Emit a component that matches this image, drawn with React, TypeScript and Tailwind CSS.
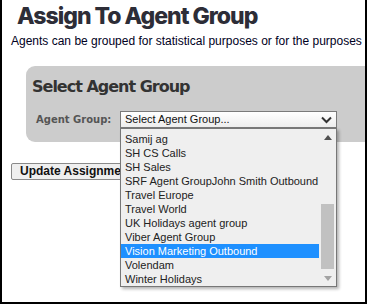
import React from "react";

const items = [
  "Samij ag",
  "SH CS Calls",
  "SH Sales",
  "SRF Agent GroupJohn Smith Outbound",
  "Travel Europe",
  "Travel World",
  "UK Holidays agent group",
  "Viber Agent Group",
  "Vision Marketing Outbound",
  "Volendam",
  "Winter Holidays",
];

export default function App() {
  return (
    <div className="relative w-[367px] h-[304px] overflow-hidden bg-white border-x-2 border-b-2 border-black font-['Liberation_Sans',Arial,sans-serif]">
      <h1 className="pl-[15px] pt-[1px] h-[34px] text-[23px] leading-[30px] font-extrabold text-[#2d2d37] tracking-[-1px] font-['Inter',sans-serif]">
        Assign To Agent Group
      </h1>
      <p className="pl-[9px] text-[12px] leading-[15px] text-[#000022] whitespace-nowrap">
        Agents can be grouped for statistical purposes or for the purposes of routing calls
      </p>
      <div className="ml-[24px] mt-[17px] w-[420px] max-w-none shrink-0 h-[76px] rounded-l-[9px] bg-[#cccccc] pl-[6px] pt-[9px]">
        <h2 className="text-[16px] leading-[24px] font-bold text-[#333333] tracking-[-1px] font-['DejaVu_Sans',Verdana,sans-serif]">
          Select Agent Group
        </h2>
        <div className="mt-[12px] flex items-center">
          <span className="w-[88px] pl-[4px] text-[10px] font-bold text-[#555555] font-['DejaVu_Sans',Verdana,sans-serif]">
            Agent Group:
          </span>
          <div className="relative w-[217px]">
            <div className="h-[17px] border border-[#7a7a7a] bg-gradient-to-b from-white to-[#ededed] flex items-center justify-between pl-[4px] pr-[4px] text-[11px] text-[#111]">
              <span>Select Agent Group...</span>
              <svg width="11" height="8" viewBox="0 0 11 8">
                <path d="M1 1.5 L5.5 6 L10 1.5" stroke="#333" strokeWidth="2" fill="none" />
              </svg>
            </div>
            <div className="absolute left-0 top-full w-[217px] h-[159px] bg-[#efefef] border border-[#777] shadow-[2px_2px_3px_rgba(0,0,0,0.3)] flex overflow-hidden z-10">
              <div className="flex-1 min-w-0 overflow-hidden pt-[3px]">
                {items.map((it) => (
                  <div
                    key={it}
                    className={
                      "h-[14px] leading-[14px] pl-[4px] text-[11px] whitespace-nowrap " +
                      (it === "Vision Marketing Outbound"
                        ? "bg-[#1e90ff] text-white"
                        : "text-[#222]")
                    }
                  >
                    {it}
                  </div>
                ))}
              </div>
              <div className="w-[17px] shrink-0 flex flex-col items-center">
                <div className="h-[16px] flex items-center justify-center">
                  <svg width="8" height="5" viewBox="0 0 8 5">
                    <path d="M0 5 L4 0 L8 5 Z" fill="#505050" />
                  </svg>
                </div>
                <div className="flex-1 w-[13px] relative">
                  <div className="absolute left-0 right-0 top-[59px] h-[65px] bg-[#c1c1c1]" />
                </div>
                <div className="h-[16px] flex items-center justify-center">
                  <svg width="8" height="5" viewBox="0 0 8 5">
                    <path d="M0 0 L8 0 L4 5 Z" fill="#a3a3a3" />
                  </svg>
                </div>
              </div>
            </div>
          </div>
        </div>
      </div>
      <div className="pl-[9px] mt-[16px]">
        <button className="h-[17px] px-[8px] border border-[#8a8a8a] rounded-[2px] bg-[#efefef] text-[12px] leading-[15px] font-bold text-[#111]">
          Update Assignment
        </button>
      </div>
    </div>
  );
}
